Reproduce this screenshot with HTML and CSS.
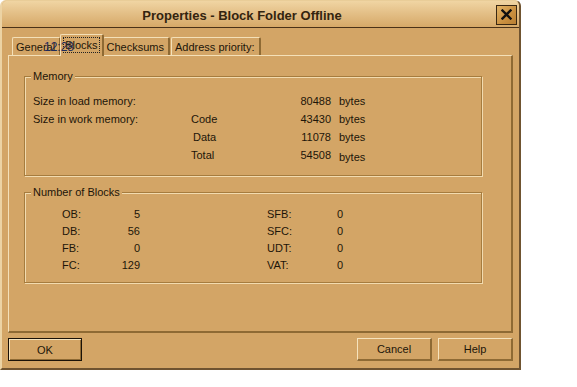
FILE: index.html
```html
<!DOCTYPE html>
<html lang="en">
<head>
  <meta charset="UTF-8" />
  <title>Properties - Block Folder Offline</title>
  <link rel="stylesheet" href="styles.css">
</head>
<body>
  <div class="window">
    <div class="titlebar">
      <div class="title">Properties - Block Folder Offline</div>
      <div class="close">
        <svg width="11" height="11" viewBox="0 0 11 11"><path d="M1.5 1.5 L9.5 9.5 M9.5 1.5 L1.5 9.5" stroke="#111" stroke-width="2.4" stroke-linecap="square"/></svg>
      </div>
    </div>

    <div class="content">
      <div class="tabs">
        <div class="tab">General</div>
        <div class="tab active"><span class="focus">Blocks</span></div>
        <div class="tab">Checksums</div>
        <div class="tab">Address priority:</div>
        <span class="clock">12:28</span>
      </div>

      <div class="panel">
        <div class="group memory">
          <span class="legend">Memory</span>
          <div class="mem-grid">
            <span>Size in load memory:</span><span></span><span class="num">80488</span><span class="unit">bytes</span>
            <span>Size in work memory:</span><span>Code</span><span class="num">43430</span><span class="unit">bytes</span>
            <span></span><span class="sub">Data</span><span class="num">11078</span><span class="unit">bytes</span>
            <span></span><span>Total</span><span class="num">54508</span><span class="unit low">bytes</span>
          </div>
        </div>

        <div class="group blocks">
          <span class="legend">Number of Blocks</span>
          <div class="blk-grid">
            <span>OB:</span><span class="num">5</span><span></span><span>SFB:</span><span class="num">0</span>
            <span>DB:</span><span class="num">56</span><span></span><span>SFC:</span><span class="num">0</span>
            <span>FB:</span><span class="num">0</span><span></span><span>UDT:</span><span class="num">0</span>
            <span>FC:</span><span class="num">129</span><span></span><span>VAT:</span><span class="num">0</span>
          </div>
        </div>
      </div>

      <div class="buttons">
        <div class="btn default">OK</div>
        <div class="spacer"></div>
        <div class="btn">Cancel</div>
        <div class="btn">Help</div>
      </div>
    </div>
  </div>
</body>
</html>
```

FILE: styles.css
```css
body {
  margin: 0;
  background: #fff;
  font-family: 'Liberation Sans', Arial, sans-serif;
  font-size: 11px;
  color: #1d1509;
}

.window {
  width: 521px;
  height: 370px;
  box-sizing: border-box;
  background: #d3a566;
  border-left: 2px solid #ecd3a4;
  border-top: 1px solid #e9cd98;
  border-right: 2px solid #6f5330;
  border-bottom: 2px solid #6f5330;
  border-radius: 6px 6px 0 0;
  overflow: hidden;
}

.titlebar {
  height: 26px;
  display: flex;
  align-items: center;
  background: linear-gradient(#f0d5a3, #e4c088 45%, #d6a968);
  border-bottom: 1px solid #4a3218;
  padding-right: 2px;
}

.title {
  flex: 1;
  text-align: center;
  font-size: 13px;
  font-weight: bold;
  color: #33240f;
  padding: 2px 14px 0 0;
}

.close {
  width: 19px;
  height: 18px;
  border: 1px solid #3a2812;
  background: linear-gradient(135deg, #e3b466, #c98f3f 60%, #b97f33);
  display: flex;
  align-items: center;
  justify-content: center;
  margin-top: 1px;
}

.content {
  padding: 7px 6px 0 6px;
}

.tabs {
  position: relative;
  display: flex;
  align-items: flex-end;
  height: 20px;
  padding-left: 4px;
}

.tab {
  height: 18px;
  box-sizing: border-box;
  padding: 3px 4px 0 3px;
  border-top: 1px solid #f4e0b8;
  border-left: 1px solid #f4e0b8;
  border-right: 2px solid #8e6a34;
  border-radius: 2px 2px 0 0;
  margin-right: 1px;
  white-space: nowrap;
}

.tab.active {
  margin: 0 -1px -1px -2px;
  padding: 2px 2px 0 2px;
  position: relative;
  z-index: 1;
  background: #d3a566;
  height: 22px;
}

.focus {
  display: inline-block;
  border: 1px dotted #222;
  padding: 0 1px;
  line-height: 14px;
}

.clock {
  position: absolute;
  left: 36px;
  top: 5px;
  color: #1e2a5a;
  font-size: 12px;
  z-index: 2;
}

.panel {
  height: 278px;
  box-sizing: border-box;
  border-top: 1px solid #f4e0b8;
  border-left: 1px solid #f4e0b8;
  border-right: 2px solid #8e6a34;
  border-bottom: 2px solid #8e6a34;
  padding: 20px 29px 0 15px;
  display: flex;
  flex-direction: column;
  gap: 16px;
}

.group {
  position: relative;
  box-sizing: border-box;
  border: 1px solid #a67c3e;
  box-shadow: inset 1px 1px 0 #f2dbaf, 1px 1px 0 #f2dbaf;
}

.legend {
  position: absolute;
  left: 6px;
  top: -8px;
  padding: 0 2px;
  background: #d3a566;
  line-height: 14px;
}

.memory {
  height: 100px;
  padding: 15px 0 0 8px;
}

.mem-grid {
  display: grid;
  grid-template-columns: 158px 58px 82px auto;
  grid-auto-rows: 18px;
  align-items: center;
}

.num {
  text-align: right;
}

.sub {
  padding-left: 2px;
}

.unit {
  padding-left: 8px;
}

.unit.low {
  padding-top: 4px;
}

.blocks {
  height: 91px;
  padding: 12px 0 0 37px;
}

.blk-grid {
  display: grid;
  grid-template-columns: 40px 38px 127px 60px 16px;
  grid-auto-rows: 17px;
  align-items: center;
}

.buttons {
  display: flex;
  gap: 6px;
  padding-top: 5px;
}

.spacer {
  flex: 1;
}

.btn {
  width: 75px;
  height: 23px;
  box-sizing: border-box;
  display: flex;
  align-items: center;
  justify-content: center;
  border-top: 1px solid #f6e3bd;
  border-left: 1px solid #f6e3bd;
  border-right: 2px solid #8e6a34;
  border-bottom: 2px solid #8e6a34;
}

.btn.default {
  width: 74px;
  border: 1px solid #1a1208;
  box-shadow: inset 1px 1px 0 #f6e3bd, inset -1px -1px 0 #8e6a34;
}
```
